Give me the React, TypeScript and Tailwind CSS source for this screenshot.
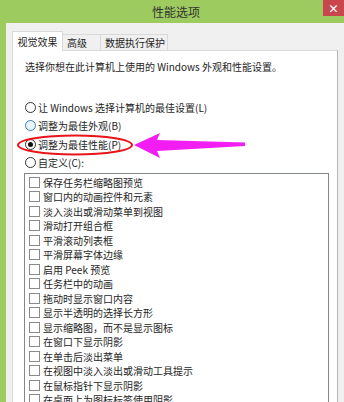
import React from "react";

const FONT = '"Noto Sans CJK SC", "Noto Sans", sans-serif';

const radios = [
  { label: "让 Windows 选择计算机的最佳设置(L)", state: "off" },
  { label: "调整为最佳外观(B)", state: "hover" },
  { label: "调整为最佳性能(P)", state: "on" },
  { label: "自定义(C):", state: "off" },
];

const effects = [
  "保存任务栏缩略图预览",
  "窗口内的动画控件和元素",
  "淡入淡出或滑动菜单到视图",
  "滑动打开组合框",
  "平滑滚动列表框",
  "平滑屏幕字体边缘",
  "启用 Peek 预览",
  "任务栏中的动画",
  "拖动时显示窗口内容",
  "显示半透明的选择长方形",
  "显示缩略图，而不是显示图标",
  "在窗口下显示阴影",
  "在单击后淡出菜单",
  "在视图中淡入淡出或滑动工具提示",
  "在鼠标指针下显示阴影",
  "在桌面上为图标标签使用阴影",
];

function Radio({ state }: { state: string }) {
  if (state === "hover") {
    return <span className="h-[11px] w-[11px] shrink-0 rounded-full border border-[#3c7fb1] bg-[#eaf4fc]" />;
  }
  return (
    <span className="flex h-[11px] w-[11px] shrink-0 items-center justify-center rounded-full border border-[#333] bg-white">
      {state === "on" && <span className="h-[5px] w-[5px] rounded-full bg-[#111]" />}
    </span>
  );
}

export default function App() {
  return (
    <div
      className="relative flex h-[402px] w-[344px] flex-col overflow-hidden bg-[#9dcb5f] text-[#1e1e1e]"
      style={{ fontFamily: FONT }}
    >
      {/* Title bar */}
      <div className="relative flex h-[23px] shrink-0 items-center justify-center pl-[8px] text-[12px] text-[#333]">
        性能选项
        <div className="absolute right-0 top-0 flex h-[16px] w-[21px] items-center justify-center bg-[#c9464c] text-[11px] font-bold leading-none text-white">
          ×
        </div>
      </div>

      {/* Body */}
      <div className="ml-[6px] flex flex-1 flex-col bg-[#f0f0f0] pl-[6px] pr-[6px] pt-[8px]">
        {/* Tabs */}
        <div className="relative z-10 -mb-px flex h-[20px] items-end text-[10px]">
          <div className="flex h-[20px] w-[51px] items-center justify-center border-x border-t border-[#d9d9d9] bg-white pb-[1px]">
            视觉效果
          </div>
          <div className="flex h-[17px] w-[38px] items-center border border-l-0 border-[#d9d9d9] bg-[#f0f0f0] pl-[4px]">
            高级
          </div>
          <div className="flex h-[17px] w-[67px] items-center border border-l-0 border-[#d9d9d9] bg-[#f0f0f0] pl-[4px]">
            数据执行保护
          </div>
        </div>

        {/* Panel */}
        <div className="flex flex-1 flex-col border border-[#d9d9d9] border-r-[#b5b5b5] bg-white pl-[12px] text-[10px]">
          <div className="mt-[9px] leading-[14px]">选择你想在此计算机上使用的 Windows 外观和性能设置。</div>

          <div className="mt-[24px] flex flex-col">
            {radios.map((r) => (
              <div key={r.label} className="flex h-[18.5px] items-center gap-[2px]">
                <Radio state={r.state} />
                <span>{r.label}</span>
              </div>
            ))}
          </div>

          <div className="-ml-px mt-[1px] flex w-[305px] flex-1 flex-col border border-[#828790] pt-[1px]">
            {effects.map((e) => (
              <div key={e} className="flex h-[14.5px] shrink-0 items-center gap-[3px] pl-[4px]">
                <span className="h-[11px] w-[11px] shrink-0 border border-[#8a8a8a] bg-white" />
                <span className="whitespace-nowrap">{e}</span>
              </div>
            ))}
          </div>
        </div>
      </div>

      {/* Annotation: red ellipse and magenta arrow */}
      <svg className="pointer-events-none absolute left-0 top-0" width="344" height="402">
        <ellipse cx="75" cy="145" rx="57" ry="9.5" fill="none" stroke="#e8141a" strokeWidth="2" />
        <polygon
          points="134,145 160,133 157,140 245,142.5 245,146 157,151 160,158"
          fill="#f21df2"
        />
      </svg>
    </div>
  );
}
